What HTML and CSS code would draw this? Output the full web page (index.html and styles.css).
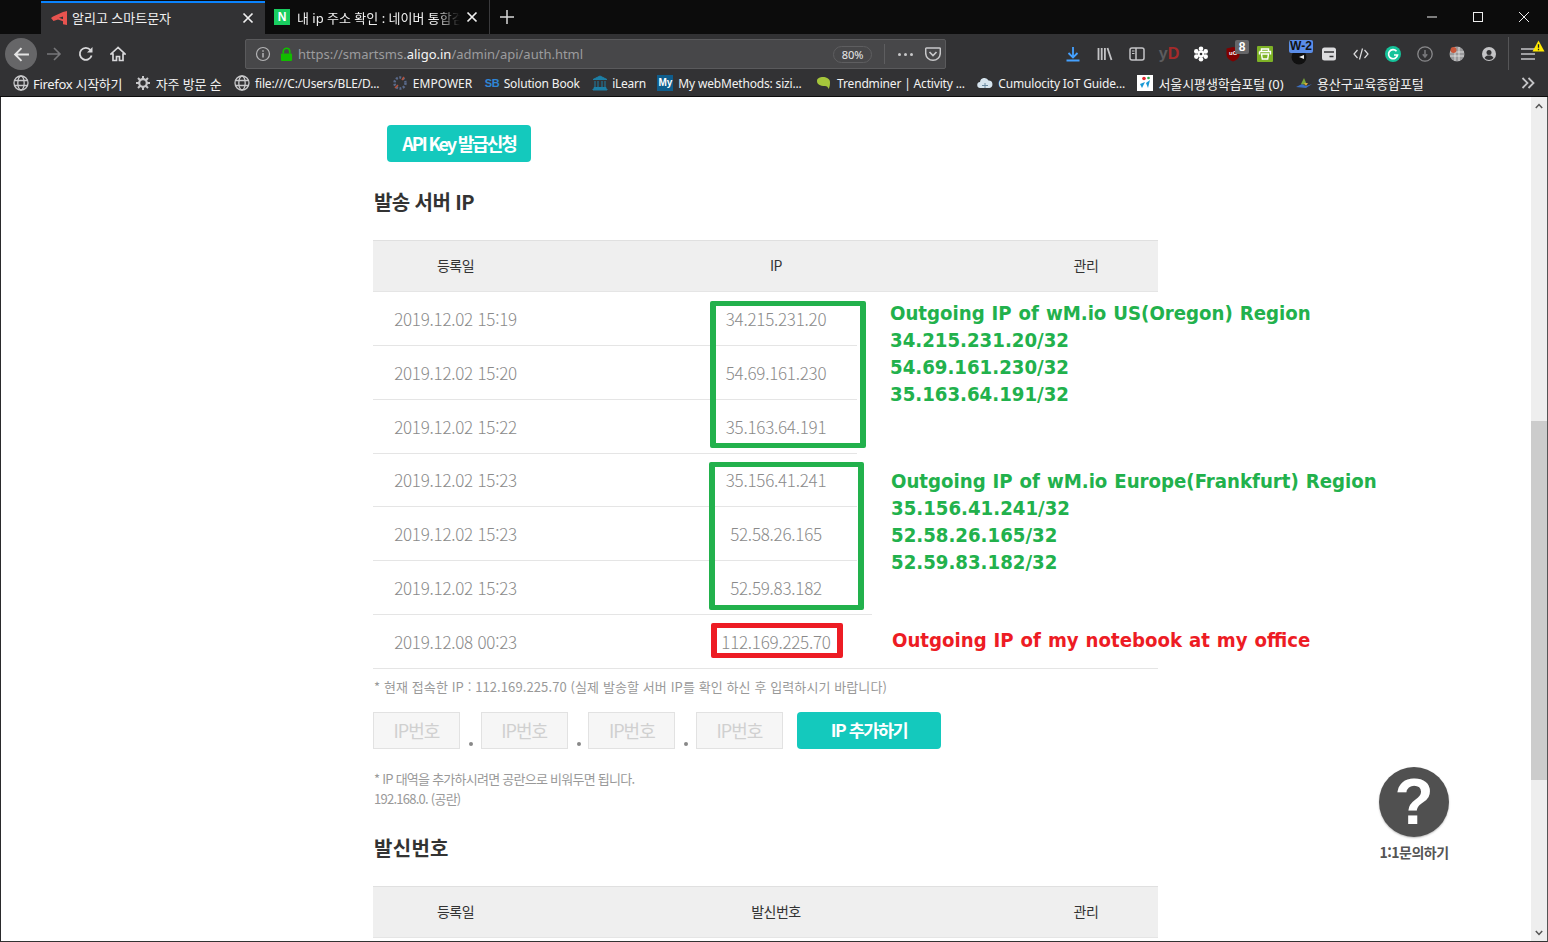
FILE: index.html
```html
<!DOCTYPE html>
<html lang="ko">
<head>
    <meta charset="UTF-8">
    <title>알리고 스마트문자</title>
    <link rel="stylesheet" href="styles.css">
</head>
<body>
    <svg class="defs" width="0" height="0">
        <symbol id="globe" viewBox="0 0 16 16"><g fill="none" stroke="#c8c8ca" stroke-width="1.3"><circle cx="8" cy="8" r="7"/><ellipse cx="8" cy="8" rx="3.2" ry="7"/><path d="M1.5 5.5h13M1.5 10.5h13"/></g></symbol>
        <symbol id="close" viewBox="0 0 12 12"><path d="M1.500 1.500l9 9M10.500 1.500l-9 9" stroke="#f0f0f0" stroke-width="1.700"/></symbol>
    </svg>

    <div class="tabbar">
        <div class="tab tab-active">
            <svg class="tab-icon" viewBox="0 0 18 14"><path d="M17 0v14l-4-.8v-3L8 8.600 3.500 10 1 7l2-1.500L13 1z" fill="#e8534f"/><path d="M9 6.800l4-1.300v2.700z" fill="#323234"/></svg>
            <span class="tab-title">알리고 스마트문자</span>
            <svg class="tab-close"><use href="#close"/></svg>
        </div>
        <div class="tab">
            <span class="naver">N</span>
            <span class="tab-title tab-fade">내 ip 주소 확인 : 네이버 통합검색</span>
            <svg class="tab-close"><use href="#close"/></svg>
        </div>
        <svg class="new-tab" viewBox="0 0 14 14"><path d="M7 0v14M0 7h14" stroke="#d8d8d8" stroke-width="1.500"/></svg>
        <div class="window-btns">
            <svg viewBox="0 0 12 12"><path d="M1 6h10" stroke="#eee"/></svg>
            <svg viewBox="0 0 12 12"><rect x="1.500" y="1.500" width="9" height="9" fill="none" stroke="#eee"/></svg>
            <svg viewBox="0 0 12 12"><path d="M1 1l10 10M11 1L1 11" stroke="#eee"/></svg>
        </div>
    </div>

    <div class="navbar">
        <div class="back-btn">
            <svg viewBox="0 0 16 16"><path d="M15 8H2M8 2L2 8l6 6" fill="none" stroke="#e4e4e4" stroke-width="1.800"/></svg>
        </div>
        <svg class="nav-icon" viewBox="0 0 16 16"><path d="M15 8H2M8 2L2 8l6 6" transform="rotate(180 8 8)" fill="none" stroke="#77777a" stroke-width="1.600"/></svg>
        <svg class="nav-icon" viewBox="0 0 16 16"><path d="M13.600 9.500A6 6 0 1 1 12.500 4" fill="none" stroke="#d8d8da" stroke-width="1.800"/><path d="M14.500 1v5.500H9z" fill="#d8d8da"/></svg>
        <svg class="nav-icon" viewBox="0 0 16 16"><path d="M8 1.500L1 8h2v6.500h3.500v-4h3v4H13V8h2z" fill="none" stroke="#d8d8da" stroke-width="1.700"/></svg>

        <div class="urlbar">
            <svg class="url-info" viewBox="0 0 16 16"><circle cx="8" cy="8" r="6.500" fill="none" stroke="#b4b4b6" stroke-width="1.200"/><path d="M8 7v4.500M8 4.200v1.500" stroke="#b4b4b6" stroke-width="1.500"/></svg>
            <svg class="url-lock" viewBox="0 0 14 16"><path d="M3.500 7V4.800a3.500 3.500 0 0 1 7 0V7" fill="none" stroke="#12bc00" stroke-width="1.800"/><rect x="1" y="7" width="12" height="8" rx="1" fill="#12bc00"/></svg>
            <span class="url-text">https://smartsms.<b>aligo.in</b>/admin/api/auth.html</span>
            <span class="zoom-pill">80%</span>
            <span class="url-sep"></span>
            <span class="url-dots"><i></i><i></i><i></i></span>
            <svg class="url-pocket" viewBox="0 0 16 16"><path d="M1.500 2h13a.8.8 0 0 1 .8.800V7a7.300 7.300 0 0 1-14.600 0V2.800a.8.8 0 0 1 .8-.8z" fill="none" stroke="#c8c8ca" stroke-width="1.500"/><path d="M4.500 6L8 9.500 11.500 6" fill="none" stroke="#c8c8ca" stroke-width="1.700"/></svg>
        </div>

        <div class="toolbar">
            <span class="tool"><svg viewBox="0 0 16 16"><path d="M8 1v10M3.500 7L8 11.500 12.500 7M1.500 14.500h13" fill="none" stroke="#45a1ff" stroke-width="1.800"/></svg></span>
            <span class="tool"><svg viewBox="0 0 16 16"><path d="M1.500 2v12M4.700 2v12M7.900 2v12M10.500 2l4 12" fill="none" stroke="#c4c4c6" stroke-width="1.800"/></svg></span>
            <span class="tool"><svg viewBox="0 0 16 16"><rect x="1" y="2" width="14" height="12" rx="2" fill="none" stroke="#c4c4c6" stroke-width="1.500"/><path d="M7 2v12" stroke="#c4c4c6" stroke-width="1.500"/><path d="M3 5h2.500M3 7.500h2.500" stroke="#c4c4c6"/></svg></span>
            <span class="tool tool-yd"><i>y</i><b>D</b></span>
            <span class="tool"><svg viewBox="0 0 16 16"><g fill="#fff"><circle cx="8" cy="2.800" r="2.300"/><circle cx="8" cy="13.200" r="2.300"/><circle cx="3.300" cy="5.400" r="2.300"/><circle cx="12.700" cy="5.400" r="2.300"/><circle cx="3.300" cy="10.600" r="2.300"/><circle cx="12.700" cy="10.600" r="2.300"/><circle cx="8" cy="8" r="3.400"/></g><circle cx="8" cy="8" r="1.300" fill="#323234"/></svg></span>
            <span class="tool">
                <svg viewBox="0 0 16 16"><path d="M8 1l6.500 1.500v6C14.500 12 11 14.500 8 15.500 5 14.500 1.500 12 1.500 8.500v-6z" fill="#800000"/></svg>
                <span class="ub-text">uO</span>
                <span class="badge badge-gray">8</span>
            </span>
            <span class="tool"><svg viewBox="0 0 16 16"><rect width="16" height="16" rx="1" fill="#7eb226"/><path d="M4.500 5V3h7v2M2.500 5.500h11v3M2.500 5.500v3M4.500 8h7l-.8 5H5.300z" fill="none" stroke="#fff" stroke-width="1.400"/></svg></span>
            <span class="tool">
                <svg class="tool-shift" viewBox="0 0 16 16"><circle cx="8" cy="8" r="7.500" fill="#111"/><path d="M8 8l5-2v4z" fill="#eee"/></svg>
                <span class="badge badge-blue">W-2</span>
            </span>
            <span class="tool"><svg viewBox="0 0 16 16"><rect x="1" y="1.500" width="14" height="13" rx="2.500" fill="#dcdcde"/><path d="M3 6h10M8.500 10.500h4" stroke="#323234" stroke-width="1.500"/></svg></span>
            <span class="tool"><svg viewBox="0 0 16 16"><path d="M4.500 4L1 8l3.500 4M11.500 4L15 8l-3.500 4M9.500 2.500l-3 11" fill="none" stroke="#dcdcde" stroke-width="1.200"/></svg></span>
            <span class="tool"><svg viewBox="0 0 16 16"><circle cx="8" cy="8" r="8" fill="#15c39a"/><path d="M11.500 5.300A4.500 4.500 0 1 0 12.500 9H9" fill="none" stroke="#fff" stroke-width="1.700"/></svg></span>
            <span class="tool"><svg viewBox="0 0 16 16"><circle cx="8" cy="8" r="7.200" fill="none" stroke="#8a8a8c" stroke-width="1.300"/><path d="M8 4v6M5.800 8.300L8 11l2.200-2.700" fill="none" stroke="#77777a" stroke-width="1.600"/></svg></span>
            <span class="tool"><svg viewBox="0 0 16 16"><circle cx="8" cy="8" r="7.500" fill="#9a9a9c"/><path d="M6 1v14M10 1v14M1 6h14M1 10h14" stroke="#e8e8e8" stroke-width=".8"/><circle cx="4.500" cy="4" r="3" fill="#c9573a"/></svg></span>
            <span class="tool"><svg viewBox="0 0 16 16"><circle cx="8" cy="8" r="7" fill="#c4c4c6"/><circle cx="8" cy="6.500" r="2.500" fill="#323234"/><path d="M3.500 12c1-2 2.500-2.500 4.500-2.500s3.500.5 4.500 2.500A6 6 0 0 1 3.500 12z" fill="#323234"/></svg></span>
            <span class="tool-sep"></span>
            <span class="tool tool-menu">
                <svg viewBox="0 0 16 16"><path d="M1 3h14M1 8h14M1 13h14" stroke="#c4c4c6" stroke-width="1.700"/></svg>
                <svg class="menu-warn" viewBox="0 0 14 13"><path d="M7 .5L13.500 12.500H.5z" fill="#ffe900"/><path d="M7 4.500v4M7 9.500V11" stroke="#222" stroke-width="1.400"/></svg>
            </span>
        </div>
    </div>

    <div class="bookmarks">
        <span class="bm bm-ko"><svg class="bm-icon"><use href="#globe"/></svg>Firefox 시작하기</span>
        <span class="bm bm-ko"><svg class="bm-icon" viewBox="0 0 16 16"><circle cx="8" cy="8" r="3.800" fill="none" stroke="#c8c8ca" stroke-width="2.200"/><path d="M8 1v3M8 12v3M1 8h3M12 8h3M3 3l2.200 2.200M10.800 10.800L13 13M13 3l-2.200 2.200M5.200 10.800L3 13" stroke="#c8c8ca" stroke-width="2"/></svg>자주 방문 순</span>
        <span class="bm bm-tight"><svg class="bm-icon"><use href="#globe"/></svg>file:///C:/Users/BLE/D...</span>
        <span class="bm"><svg class="bm-icon" viewBox="0 0 16 16"><circle cx="8" cy="8" r="5.500" fill="none" stroke="#5a6a8a" stroke-width="2.500" stroke-dasharray="2 1.500"/><path d="M3 13l3-3M12 2l-2 3" stroke="#b5533c" stroke-width="1.500"/></svg>EMPOWER</span>
        <span class="bm bm-tight"><span class="bm-sb">SB</span>Solution Book</span>
        <span class="bm bm-ilearn"><svg class="bm-icon" viewBox="0 0 16 16"><path d="M8 1L1 4.500h14zM1 14h14v1H1zM2 12.500h12v1H2zM3 6v6M6 6v6M10 6v6M13 6v6" fill="#1c7fa6" stroke="#1c7fa6"/></svg>iLearn</span>
        <span class="bm bm-tight"><span class="bm-my">My</span>My webMethods: sizi...</span>
        <span class="bm bm-tight bm-trend"><svg class="bm-icon" viewBox="0 0 16 16"><path d="M1 6c0-3 3-4 6-4s7 1.500 7 5c0 2 0 5-1.500 7-.5-2-1.500-3-3.500-3C4 11 1 9.500 1 6z" fill="#a5c63b"/></svg>Trendminer | Activity ...</span>
        <span class="bm bm-tight"><svg class="bm-icon" viewBox="0 0 16 16"><path d="M3.500 13a3 3 0 0 1-.5-6 4.500 4.500 0 0 1 8.500-1.500A3.800 3.800 0 0 1 12.500 13z" fill="#d6e4ee"/><path d="M5 10.500h6M8 8v5" stroke="#6a8aa0"/></svg>Cumulocity IoT Guide...</span>
        <span class="bm bm-ko"><svg class="bm-icon" viewBox="0 0 16 16"><rect width="16" height="16" fill="#fff"/><path d="M3 9l5-2-3 6z" fill="#1a9ad6"/><path d="M9 8l4-3-2 8z" fill="#1a9ad6"/><circle cx="7" cy="3.500" r="1.800" fill="#e0262e"/><circle cx="11.500" cy="3" r="1.300" fill="#2aa84a"/></svg>서울시평생학습포털 (0)</span>
        <span class="bm bm-ko"><svg class="bm-icon" viewBox="0 0 16 16"><path d="M0 12l6-3 4 2 6-2-6 4z" fill="#3c6fc0"/><path d="M5 9l3-6 3 7z" fill="#7aa53a"/><path d="M8 8h4l-2 3z" fill="#d8a93a"/></svg>용산구교육종합포털</span>
        <svg class="bm-more" viewBox="0 0 14 12"><path d="M1.500 1l5 5-5 5M7.500 1l5 5-5 5" fill="none" stroke="#c4c4c6" stroke-width="1.800"/></svg>
    </div>

    <div class="viewport">
        <main class="content">
            <a class="btn btn-key">API Key 발급신청</a>
            <h2 class="section-title">발송 서버 IP</h2>

            <div class="ip-table">
                <div class="row row-head"><span>등록일</span><span>IP</span><span>관리</span></div>
                <div class="row"><span>2019.12.02 15:19</span><span>34.215.231.20</span><span></span></div>
                <div class="row"><span>2019.12.02 15:20</span><span>54.69.161.230</span><span></span></div>
                <div class="row"><span>2019.12.02 15:22</span><span>35.163.64.191</span><span></span></div>
                <div class="row row-short"><span>2019.12.02 15:23</span><span>35.156.41.241</span><span></span></div>
                <div class="row"><span>2019.12.02 15:23</span><span>52.58.26.165</span><span></span></div>
                <div class="row"><span>2019.12.02 15:23</span><span>52.59.83.182</span><span></span></div>
                <div class="row"><span>2019.12.08 00:23</span><span>112.169.225.70</span><span></span></div>
            </div>

            <p class="hint">* 현재 접속한 IP : 112.169.225.70 (실제 발송할 서버 IP를 확인 하신 후 입력하시기 바랍니다)</p>

            <div class="ip-form">
                <span class="ip-input">IP번호</span><span class="ip-dot"></span>
                <span class="ip-input">IP번호</span><span class="ip-dot"></span>
                <span class="ip-input">IP번호</span><span class="ip-dot"></span>
                <span class="ip-input">IP번호</span>
                <a class="btn btn-add">IP 추가하기</a>
            </div>

            <p class="help">* IP 대역을 추가하시려면 공란으로 비워두면 됩니다.<br>192.168.0. (공란)</p>

            <h2 class="section-title section-title-2">발신번호</h2>
            <div class="ip-table">
                <div class="row row-head"><span>등록일</span><span>발신번호</span><span>관리</span></div>
            </div>
        </main>

        <!-- annotations drawn over the captured page -->
        <div class="patch patch-a"></div>
        <div class="patch patch-b"></div>
        <div class="mark mark-us"></div>
        <div class="mark mark-eu"></div>
        <div class="mark mark-me"></div>
        <div class="note note-us">Outgoing IP of wM.io US(Oregon) Region<br>34.215.231.20/32<br>54.69.161.230/32<br>35.163.64.191/32</div>
        <div class="note note-eu">Outgoing IP of wM.io Europe(Frankfurt) Region<br>35.156.41.241/32<br>52.58.26.165/32<br>52.59.83.182/32</div>
        <div class="note note-me">Outgoing IP of my notebook at my office</div>

        <div class="help-float">
            <span class="help-circle">?</span>
            <span class="help-label">1:1문의하기</span>
        </div>

        <div class="scrollbar">
            <svg class="scroll-arrow scroll-up" viewBox="0 0 8 6"><path d="M.8 5L4 1.500 7.200 5" fill="none" stroke="#555" stroke-width="1.500"/></svg>
            <span class="scroll-thumb"></span>
            <svg class="scroll-arrow scroll-down" viewBox="0 0 8 6"><path d="M.8 1L4 4.500 7.200 1" fill="none" stroke="#555" stroke-width="1.500"/></svg>
        </div>
    </div>
</body>
</html>
```

FILE: styles.css
```css
* {
    box-sizing: border-box;
}
html, body {
    margin: 0;
    padding: 0;
    height: 100%;
    overflow: hidden;
}
body {
    width: 1548px;
    height: 942px;
    display: flex;
    flex-direction: column;
    font-family: "Noto Sans", "Noto Sans CJK KR", sans-serif;
    background: #323234;
}
.defs {
    position: absolute;
}

/* tabs */
.tabbar {
    height: 34px;
    flex: none;
    display: flex;
    align-items: stretch;
    padding-left: 41px;
    background: #0c0c0c;
    color: #f0f0f0;
    font-size: 13px;
}
.tab {
    width: 225px;
    display: flex;
    align-items: center;
    padding: 0 11px 0 9px;
    border-right: 1px solid #3a3a3c;
}
.tab-active {
    width: 224px;
    background: #323234;
    border-top: 2px solid #0a84ff;
    border-right: 0;
    margin-top: 1px;
    padding-bottom: 2px;
}
.tab-icon {
    width: 18px;
    height: 14px;
    flex: none;
    margin-right: 4px;
}
.naver {
    width: 16px;
    height: 16px;
    flex: none;
    margin-right: 7px;
    background: #19ce60;
    color: #fff;
    font: bold 12px/16px "Liberation Sans", sans-serif;
    text-align: center;
}
.tab-title {
    flex: 1;
    white-space: nowrap;
    overflow: hidden;
}
.tab-fade {
    -webkit-mask-image: linear-gradient(90deg, #000 85%, transparent);
    mask-image: linear-gradient(90deg, #000 85%, transparent);
}
.tab-close {
    width: 12px;
    height: 12px;
    flex: none;
    margin-left: 6px;
}
.new-tab {
    width: 14px;
    height: 14px;
    margin: 10px 0 0 10px;
}
.window-btns {
    margin-left: auto;
    display: flex;
    gap: 34px;
    padding: 11px 18px 0 0;
}
.window-btns svg {
    width: 12px;
    height: 12px;
}

/* navigation */
.navbar {
    height: 36px;
    flex: none;
    display: flex;
    align-items: center;
    padding: 4px 0 0 5px;
    background: #323234;
}
.back-btn {
    width: 32px;
    height: 32px;
    flex: none;
    display: flex;
    align-items: center;
    justify-content: center;
    border-radius: 50%;
    background: #666668;
}
.back-btn svg {
    width: 17px;
    height: 17px;
}
.nav-icon {
    width: 16px;
    height: 16px;
    flex: none;
    margin-left: 16px;
}
.back-btn + .nav-icon {
    margin-left: 9px;
}
.urlbar {
    width: 701px;
    height: 30px;
    flex: none;
    margin-left: 119px;
    display: flex;
    align-items: center;
    padding-left: 9px;
    background: #474749;
    border: 1px solid #5a5a5c;
    border-radius: 2px;
    color: #9c9c9e;
    font-size: 13px;
}
.url-info {
    width: 16px;
    height: 16px;
}
.url-lock {
    width: 13px;
    height: 15px;
    margin-left: 9px;
}
.url-text {
    margin-left: 5px;
    width: 535px;
    white-space: nowrap;
}
.url-text b {
    color: #f5f5f5;
    font-weight: 400;
}
.zoom-pill {
    width: 39px;
    height: 17px;
    flex: none;
    border: 1px solid #5e5e60;
    border-radius: 9px;
    color: #e8e8e8;
    font-size: 11px;
    line-height: 15px;
    text-align: center;
}
.url-sep {
    width: 1px;
    height: 20px;
    margin-left: 12px;
    background: #5e5e60;
}
.url-dots {
    display: flex;
    gap: 3px;
    margin-left: 13px;
}
.url-dots i {
    width: 3px;
    height: 3px;
    border-radius: 50%;
    background: #c8c8ca;
}
.url-pocket {
    width: 16px;
    height: 16px;
    margin-left: 12px;
}
.toolbar {
    display: flex;
    align-items: center;
    height: 100%;
    margin-left: 111px;
}
.tool {
    width: 32px;
    height: 16px;
    flex: none;
    position: relative;
    display: flex;
    justify-content: center;
}
.tool svg {
    width: 16px;
    height: 16px;
}
.tool .tool-shift {
    margin: 3px 0 0 3px;
}
.tool-yd {
    font: bold 16px/16px "Liberation Sans", sans-serif;
}
.tool-yd i {
    font-style: normal;
    color: #5c5c5e;
}
.tool-yd b {
    color: #a52a2a;
}
.ub-text {
    position: absolute;
    left: 12px;
    top: 4px;
    color: #fff;
    font: bold 6px/7px "Liberation Sans", sans-serif;
}
.badge {
    position: absolute;
    font: bold 12px/14px "Liberation Sans", sans-serif;
    text-align: center;
    border-radius: 2px;
}
.badge-gray {
    left: 18px;
    top: -6px;
    width: 14px;
    height: 14px;
    background: #666668;
    color: #fff;
}
.badge-blue {
    left: 8px;
    top: -6px;
    width: 24px;
    height: 13px;
    line-height: 13px;
    background: #5a8de8;
    color: #111;
}
.tool-sep {
    width: 1px;
    height: 34px;
    flex: none;
    margin: 0 3px;
    background: #555557;
}
.tool-menu .menu-warn {
    position: absolute;
    left: 20px;
    top: -6px;
    width: 13px;
    height: 12px;
}

/* bookmarks */
.bookmarks {
    height: 27px;
    flex: none;
    display: flex;
    align-items: center;
    gap: 12.5px;
    padding-left: 13px;
    background: #323234;
    border-bottom: 1px solid #0c0c0c;
    color: #f2f2f2;
    font-size: 12px;
    white-space: nowrap;
}
.bm {
    display: flex;
    align-items: center;
    gap: 5px;
}
.bm-ko {
    font-size: 13px;
    letter-spacing: -.1px;
}
.bm-ko:first-child {
    gap: 4px;
    letter-spacing: -.3px;
}
.bm-tight {
    letter-spacing: -.17px;
}
.bm-ilearn {
    gap: 4px;
    margin-right: -1px;
    letter-spacing: -.3px;
}
.bm-trend {
    margin-left: 2px;
}
.bm-icon {
    width: 16px;
    height: 16px;
    flex: none;
}
.bm-sb {
    width: 14px;
    color: #2f86d6;
    font: bold 11px/16px "Liberation Sans", sans-serif;
}
.bm-my {
    width: 16px;
    height: 16px;
    background: #0f5d8c;
    color: #fff;
    font: bold 10px/16px "Liberation Sans", sans-serif;
    text-align: center;
}
.bm-more {
    width: 14px;
    height: 12px;
    margin-left: auto;
    margin-right: 13px;
}

/* page */
.viewport {
    flex: 1;
    min-height: 0;
    position: relative;
    overflow: hidden;
    background: #fff;
    border-left: 1px solid #2a2a2c;
    border-right: 1px solid #555;
    border-bottom: 1px solid #333;
    font-family: "Noto Sans CJK KR", sans-serif;
}
.content {
    width: 785px;
    margin-left: 372px;
    padding-top: 28px;
}
.btn {
    display: flex;
    align-items: center;
    justify-content: center;
    padding-bottom: 2px;
    background: #14c9bd;
    border-radius: 4px;
    color: #fff;
    font-weight: 700;
}
.btn-key {
    width: 144px;
    height: 37px;
    margin-left: 14px;
    font-size: 18px;
    letter-spacing: -2.1px;
}
.section-title {
    margin: 25px 0 0 1px;
    height: 30px;
    color: #333;
    font-size: 20px;
    font-weight: 700;
    line-height: 30px;
    letter-spacing: -.6px;
}
.ip-table {
    margin-top: 23px;
}
.row {
    height: 54px;
    display: grid;
    grid-template-columns: 165px 476px 144px;
    align-items: center;
    padding-bottom: 1px;
    border-bottom: 1px solid #e5e5e5;
    color: #8a8a8a;
    font-size: 17px;
    font-weight: 300;
    letter-spacing: -.25px;
    text-align: center;
}
.row-short {
    height: 53px;
}
.row-head {
    height: 52px;
    padding-bottom: 2px;
    border-top: 1px solid #e0e0e0;
    background: #efefef;
    color: #333;
    font-size: 14px;
    font-weight: 400;
    letter-spacing: -.5px;
}
.hint {
    margin: 8px 0 0 1px;
    height: 19px;
    color: #999;
    font-size: 13px;
    line-height: 19px;
    letter-spacing: .1px;
    white-space: nowrap;
}
.ip-form {
    display: flex;
    margin-top: 16px;
}
.ip-input {
    width: 87px;
    height: 37px;
    background: #f6f6f6;
    border: 1px solid #e2e2e2;
    color: #d0d0d0;
    font-size: 18px;
    line-height: 35px;
    letter-spacing: -1px;
    text-align: center;
}
.ip-dot {
    width: 20.67px;
    position: relative;
}
.ip-dot::after {
    content: "";
    position: absolute;
    left: 9px;
    top: 30px;
    width: 4px;
    height: 4px;
    border-radius: 50%;
    background: #888;
}
.btn-add {
    width: 144px;
    height: 37px;
    margin-left: 14px;
    font-size: 17.5px;
    letter-spacing: -1.5px;
}
.help {
    margin: 20px 0 0 1px;
    color: #999;
    font-size: 13px;
    line-height: 20px;
    letter-spacing: -.75px;
}
.section-title-2 {
    margin-top: 24px;
    letter-spacing: .3px;
}

/* annotations */
.patch {
    position: absolute;
    right: 389px;
    background: #fff;
}
.patch-a {
    left: 856px;
    top: 196px;
    height: 319px;
}
.patch-b {
    left: 871px;
    top: 515px;
    height: 10px;
}
.mark {
    position: absolute;
    border: solid #22b14c;
    border-width: 5px 6px;
    border-radius: 2px;
}
.mark-us {
    left: 709px;
    top: 204px;
    width: 156px;
    height: 147px;
}
.mark-eu {
    left: 708px;
    top: 365px;
    width: 155px;
    height: 148px;
}
.mark-me {
    left: 710px;
    top: 526px;
    width: 132px;
    height: 35px;
    border-color: #ed1c24;
}
.note {
    position: absolute;
    color: #22b14c;
    font-family: "DejaVu Sans", sans-serif;
    font-size: 20.2px;
    font-stretch: condensed;
    font-weight: 700;
    line-height: 27px;
    word-spacing: .6px;
    white-space: nowrap;
}
.note-us {
    left: 889px;
    top: 203px;
}
.note-eu {
    left: 890px;
    top: 371px;
}
.note-me {
    left: 891px;
    top: 530px;
    color: #ed1c24;
}
.help-float {
    position: absolute;
    left: 1378px;
    top: 670px;
    width: 70px;
    display: flex;
    flex-direction: column;
    align-items: center;
}
.help-circle {
    width: 70px;
    height: 70px;
    border-radius: 50%;
    background: #505050;
    box-shadow: 0 1px 2px #bbb;
    color: #fff;
    font: bold 64px/70px "Liberation Sans", sans-serif;
    text-align: center;
}
.help-label {
    margin-top: 5px;
    color: #555;
    font-size: 14px;
    font-weight: 700;
    line-height: 20px;
    letter-spacing: -.5px;
    white-space: nowrap;
}
.scrollbar {
    position: absolute;
    right: 0;
    top: 0;
    bottom: 0;
    width: 16px;
    background: #eee;
}
.scroll-thumb {
    position: absolute;
    left: 0;
    top: 324px;
    width: 100%;
    height: 359px;
    background: #ccc;
}
.scroll-arrow {
    position: absolute;
    left: 4px;
    width: 8px;
    height: 6px;
}
.scroll-up {
    top: 6px;
}
.scroll-down {
    bottom: 5px;
}
```
